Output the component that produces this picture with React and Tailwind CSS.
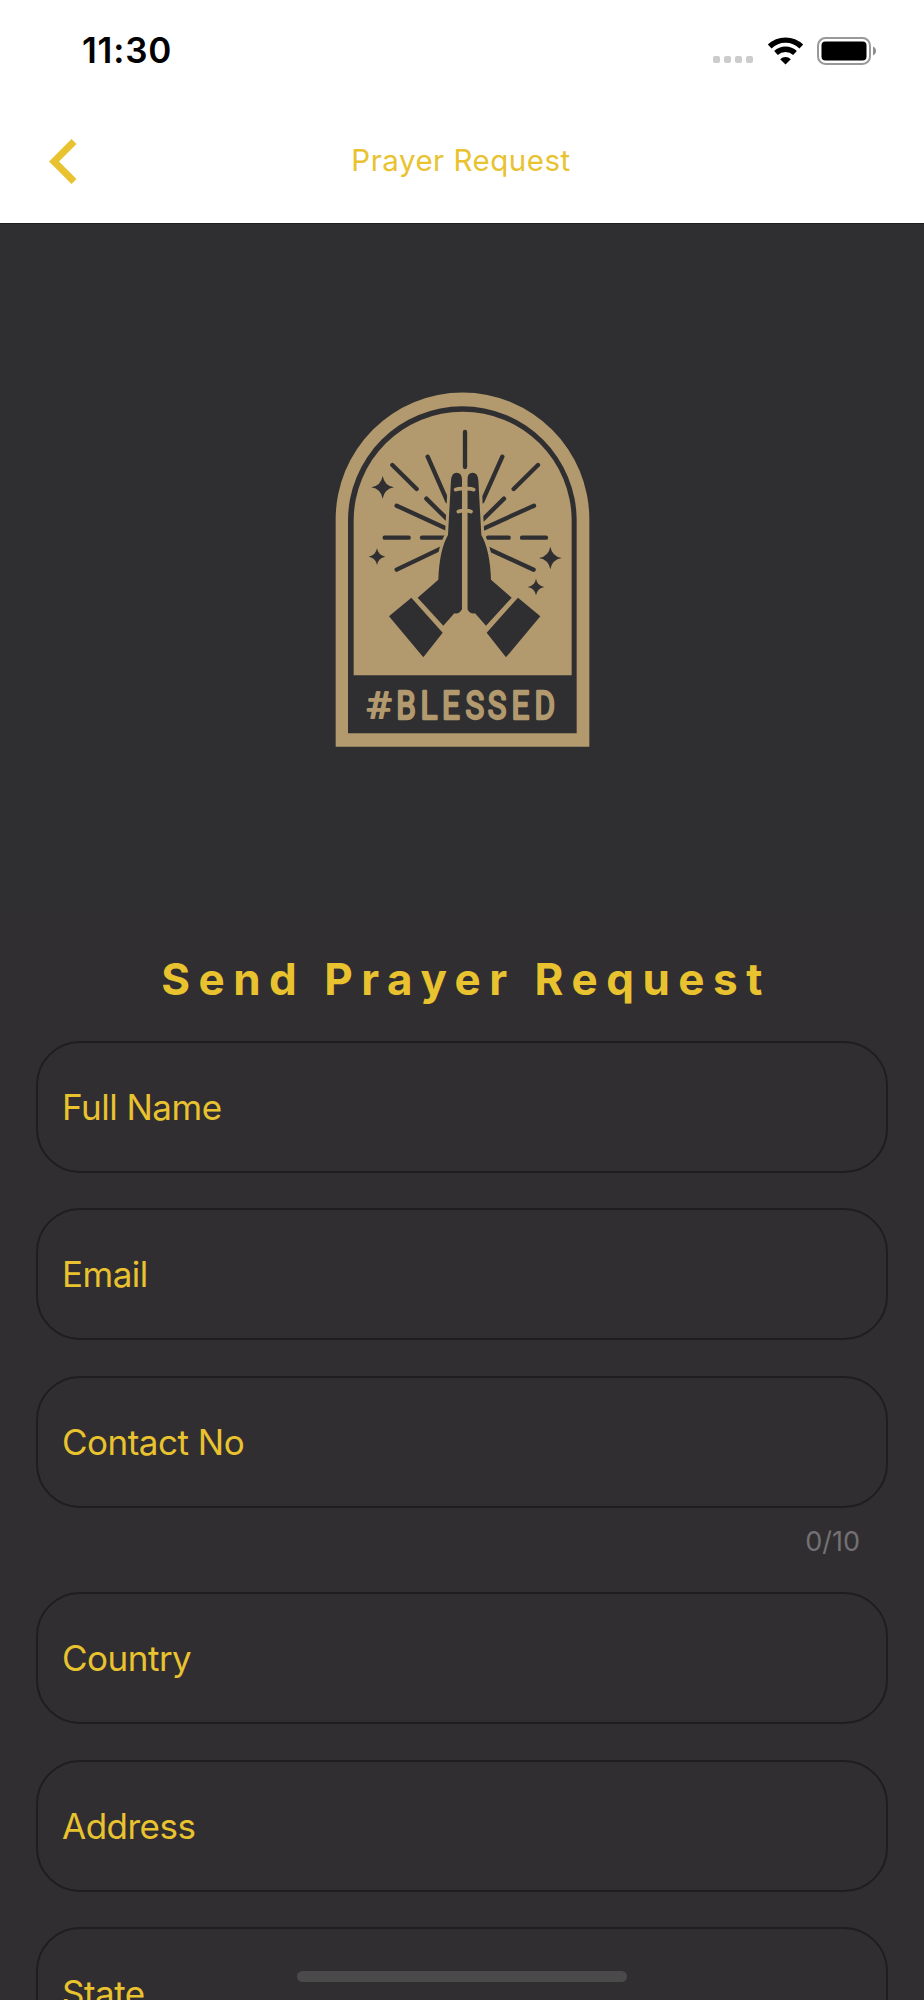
import React, { useState } from "react";

const fields = [
  { name: "fullName", label: "Full Name" },
  { name: "email", label: "Email" },
  { name: "contactNo", label: "Contact No", maxLength: 10 },
  { name: "country", label: "Country" },
  { name: "address", label: "Address" },
  { name: "state", label: "State" },
];

function StatusBar() {
  return (
    <div className="flex h-[101px] items-center justify-between pr-[47px] pl-[82px]">
      <span className="text-[35px] leading-none font-semibold tracking-[0.8px] text-black">11:30</span>
      <div className="flex items-center">
        <div className="mt-[18px] flex gap-[4px]">
          <span className="h-[7px] w-[7px] rounded-[2px] bg-[#cccccc]" />
          <span className="h-[7px] w-[7px] rounded-[2px] bg-[#cccccc]" />
          <span className="h-[7px] w-[7px] rounded-[2px] bg-[#cccccc]" />
          <span className="h-[7px] w-[7px] rounded-[2px] bg-[#cccccc]" />
        </div>
        <svg className="ml-[14px]" width="37" height="28" viewBox="0 0 37 28" fill="none" stroke="#000">
          <path d="M2.7 9.5a22.8 22.8 0 0 1 31.6 0" strokeWidth="5.4" />
          <path d="M9 16a13.8 13.8 0 0 1 19 0" strokeWidth="5.4" />
          <path d="M18.5 27.5l-5.3-5.3a7.6 7.6 0 0 1 10.6 0z" fill="#000" stroke="none" />
        </svg>
        <svg className="ml-[13px]" width="60" height="28" viewBox="0 0 60 28">
          <rect x="1" y="1" width="52" height="26" rx="7.5" fill="none" stroke="#999" strokeWidth="2" />
          <rect x="4.5" y="4.5" width="45" height="19" rx="4" fill="#000" />
          <path d="M56 9.6c4 1.6 4 7.2 0 8.8z" fill="#8d8d8d" />
        </svg>
      </div>
    </div>
  );
}

function Header() {
  return (
    <header className="flex h-[223px] flex-col bg-white">
      <StatusBar />
      <div className="grid h-[122px] grid-cols-[1fr_auto_1fr] items-center pr-[2px] pb-[2px]">
        <button type="button" aria-label="Back" className="ml-[49px] w-[28px]">
          <svg width="28" height="45" viewBox="0 0 28 45" fill="none" stroke="#e9c22f" strokeWidth="7">
            <path d="M25 2.5L5 22.5l20 20" />
          </svg>
        </button>
        <h1 className="text-[29.5px] leading-none tracking-[0.5px] text-[#e9c22f]">Prayer Request</h1>
      </div>
    </header>
  );
}

function Star({ x, y, r }) {
  return (
    <path
      d="M0-1Q.15-.15 1 0 .15.15 0 1-.15.15-1 0-.15-.15 0-1z"
      transform={`translate(${x} ${y}) scale(${r})`}
    />
  );
}

function Hand() {
  return (
    <g>
      <path
        d="M426 300Q426 278 410 278 395 278 393 300L384 465Q358 510 355 599L293 653 370 737 403 700Q418 703 426 688z"
        stroke="#b2996e"
        strokeWidth="18"
        paintOrder="stroke"
      />
      <path d="M274 653L207 709 310 832 368 758z" />
    </g>
  );
}

function Logo() {
  return (
    <svg width="290" height="380" viewBox="0 0 870 1140" fill="#2f2f31">
      <path d="M47 1100V418a380.5 380.5 0 0 1 761 0V1100z" fill="#b2996e" />
      <path d="M84 1060V422a343 343 0 0 1 686 0V1060z" />
      <path d="M101 886V422a327 327 0 0 1 654 0V886z" fill="#b2996e" />

      {/* rays of light */}
      <g stroke="#2f2f31" strokeWidth="13" strokeLinecap="round">
        <path d="M435 156V261M323 230L382 364M217 255L290 327M319 356L380 416M230 377L382 447M194 473H266M306 473H380M362 506L230 569" />
        <path d="M547 230L487 364M654 255L581 327M552 356L488 419M642 377L488 447M504 473H566M606 473H678M506 507L641 569" />
      </g>

      <Star x={188} y={322} r={34} />
      <Star x={171} y={530} r={25} />
      <Star x={691} y={534} r={34} />
      <Star x={648} y={621} r={25} />

      <Hand />
      <g transform="translate(868 0) scale(-1 1)">
        <Hand />
      </g>
      <path d="M426 290H442V700H426z" fill="#b2996e" />
      <path
        d="M407 329Q414 325 434 326 454 325 461 329M415 395Q420 392 434 392 448 392 453 395"
        fill="none"
        stroke="#b2996e"
        strokeWidth="11"
        strokeLinecap="round"
      />

      <g
        fontFamily="Roboto, sans-serif"
        fontSize="115"
        fill="#b2996e"
        stroke="#b2996e"
        strokeWidth="7"
        strokeLinejoin="round"
      >
        <text transform="translate(139 1013) scale(1.08 .95)" fontWeight="300">
          #
        </text>
        <text transform="translate(0 1016) scale(.82 1)" x="279 368 446 532 614 701 785" y="0">
          BLESSED
        </text>
      </g>
    </svg>
  );
}

function Field({ field, value, onChange }) {
  return (
    <div>
      <input
        type="text"
        name={field.name}
        placeholder={field.label}
        maxLength={field.maxLength}
        value={value}
        onChange={onChange}
        className="block h-[132px] w-full rounded-[44px] border-2 border-[#1e1d1f] bg-transparent px-[24px] text-[35px] tracking-[-0.5px] text-[#e9c22f] outline-none placeholder:text-[#e9c22f] placeholder:opacity-100"
      />
      {field.maxLength && (
        <div className="flex h-[49px] items-center justify-end pt-[18px] pr-[28px] text-[27px] leading-none text-[#727173]">
          {value.length}/{field.maxLength}
        </div>
      )}
    </div>
  );
}

export default function App() {
  const [form, setForm] = useState({});

  const handleChange = (e) => {
    setForm({ ...form, [e.target.name]: e.target.value });
  };

  return (
    <div className="relative h-[2000px] w-[924px] overflow-hidden bg-[#312e31] font-['Inter',sans-serif]">
      <Header />
      <main>
        <div className="flex h-[692px] justify-center border-t border-[#1f1f21] bg-[#2f2f31] pt-[156px] pl-[6px]">
          <Logo />
        </div>
        <h2 className="mt-[37px] pl-[8px] text-center text-[44px] leading-[54px] font-bold tracking-[8.5px] text-[#e9c22f]">
          Send Prayer Request
        </h2>
        <form className="mt-[35px] flex flex-col gap-[35.4px] px-[36px]">
          {fields.map((field) => (
            <Field key={field.name} field={field} value={form[field.name] || ""} onChange={handleChange} />
          ))}
        </form>
      </main>
      {/* Home indicator */}
      <div className="absolute bottom-[18px] left-[297px] h-[11px] w-[330px] rounded-full bg-[#4a4a4a]" />
    </div>
  );
}
